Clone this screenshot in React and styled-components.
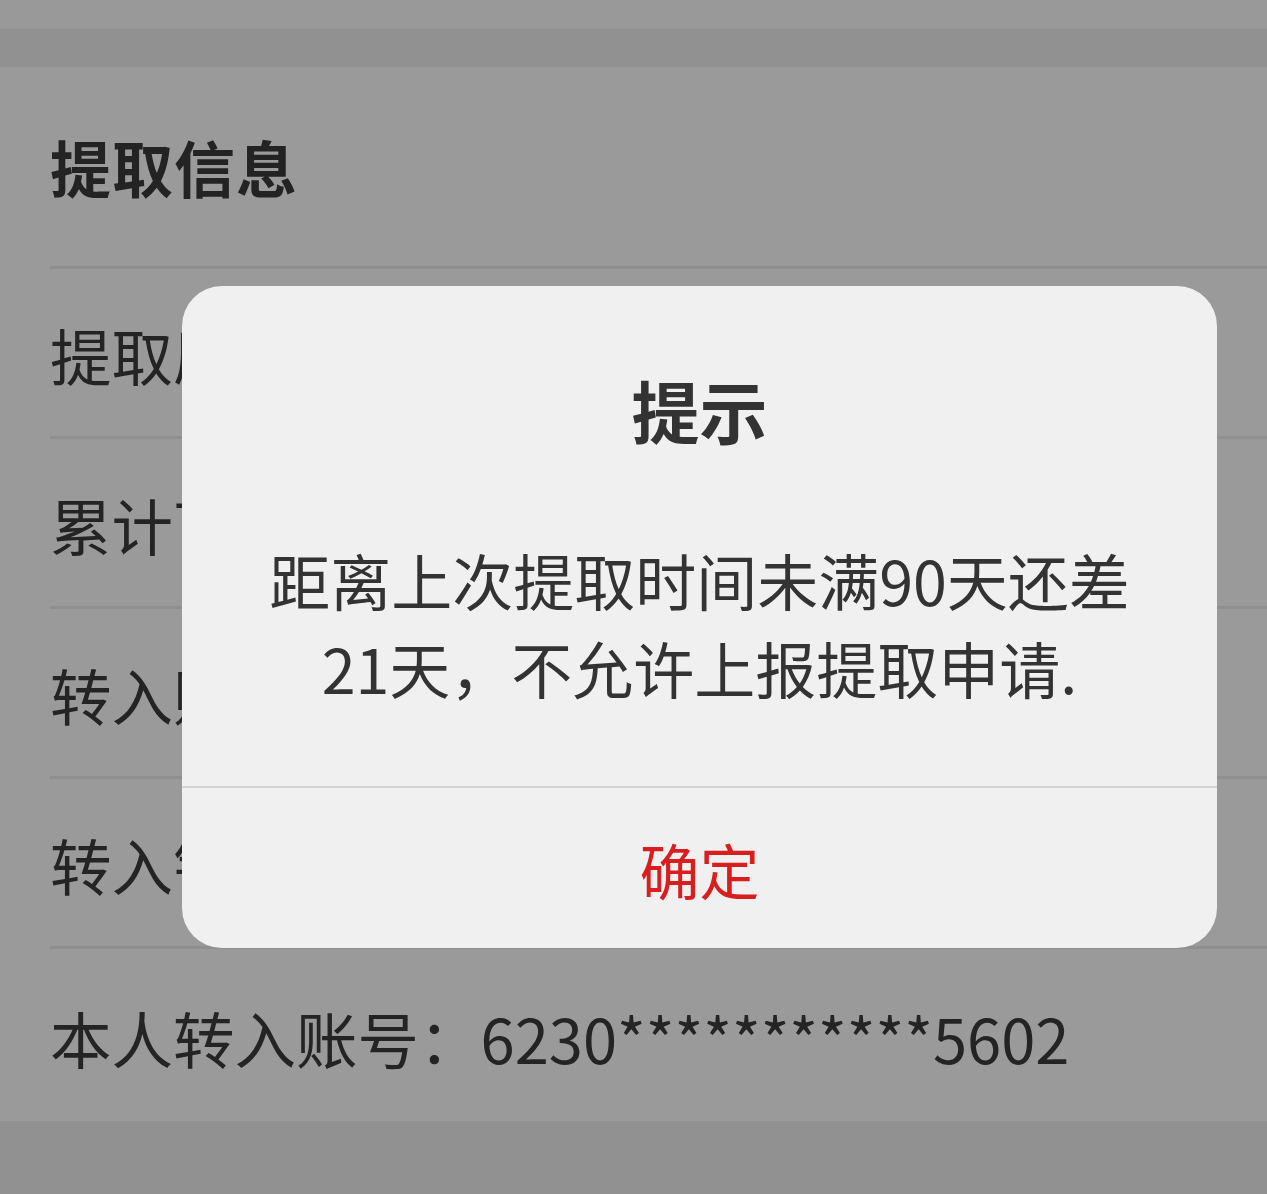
import styled, { createGlobalStyle } from "styled-components"

const GlobalStyle = createGlobalStyle`
  html, body {
    margin: 0;
    padding: 0;
    background: #919191;
    font-family: "Noto Sans CJK SC", "Noto Sans", sans-serif;
  }
`

const rows = [
  { label: "提取原因：离职提取", height: 170 },
  { label: "累计可提取金额：", height: 170 },
  { label: "转入账户：", height: 170 },
  { label: "转入银行：", height: 170 },
  { label: "本人转入账号：6230***********5602", height: 175 },
]

export default function App() {
  return (
    <Page>
      <GlobalStyle />
      <TopStrip />
      <Card>
        <CardTitle>提取信息</CardTitle>
        {rows.map((r) => (
          <Row key={r.label} $h={r.height}>{r.label}</Row>
        ))}
      </Card>

      <Dialog>
        <DialogTitle>提示</DialogTitle>
        <DialogMessage>距离上次提取时间未满90天还差21天，不允许上报提取申请.</DialogMessage>
        <DialogButton>确定</DialogButton>
      </Dialog>
    </Page>
  )
}

const Page = styled.div`
  position: relative;
  width: 1267px;
  height: 1194px;
  overflow: hidden;
  background: #919191;
`

const TopStrip = styled.div`
  height: 28px;
  background: #999999;
  border-bottom: 1px solid #959595;
`

const Card = styled.div`
  margin-top: 38px;
  background: #9a9a9a;
  padding-left: 50px;
  display: flex;
  flex-direction: column;
`

const CardTitle = styled.div`
  height: 199px;
  display: flex;
  align-items: center;
  font-size: 61px;
  font-weight: 700;
  color: #232323;
  letter-spacing: 1px;
`

const Row = styled.div`
  height: ${(p) => p.$h}px;
  box-sizing: border-box;
  border-top: 3px solid #8f8f8f;
  display: flex;
  align-items: center;
  padding-top: 4px;
  font-size: 61.5px;
  color: #242424;
  white-space: nowrap;
`

const Dialog = styled.div`
  position: absolute;
  left: 182px;
  top: 286px;
  width: 1035px;
  height: 662px;
  border-radius: 40px;
  background: #f0f0f0;
  display: flex;
  flex-direction: column;
  overflow: hidden;
`

const DialogTitle = styled.div`
  padding-top: 76px;
  text-align: center;
  font-size: 68px;
  line-height: 95px;
  font-weight: 700;
  color: #333333;
`

const DialogMessage = styled.div`
  margin-top: 79px;
  padding: 0 80px 74px;
  text-align: center;
  font-size: 61px;
  line-height: 88px;
  color: #333333;
`

const DialogButton = styled.div`
  flex: 1;
  border-top: 2px solid #d4d4d4;
  display: flex;
  align-items: center;
  justify-content: center;
  font-size: 60px;
  color: #d81e1e;
`
